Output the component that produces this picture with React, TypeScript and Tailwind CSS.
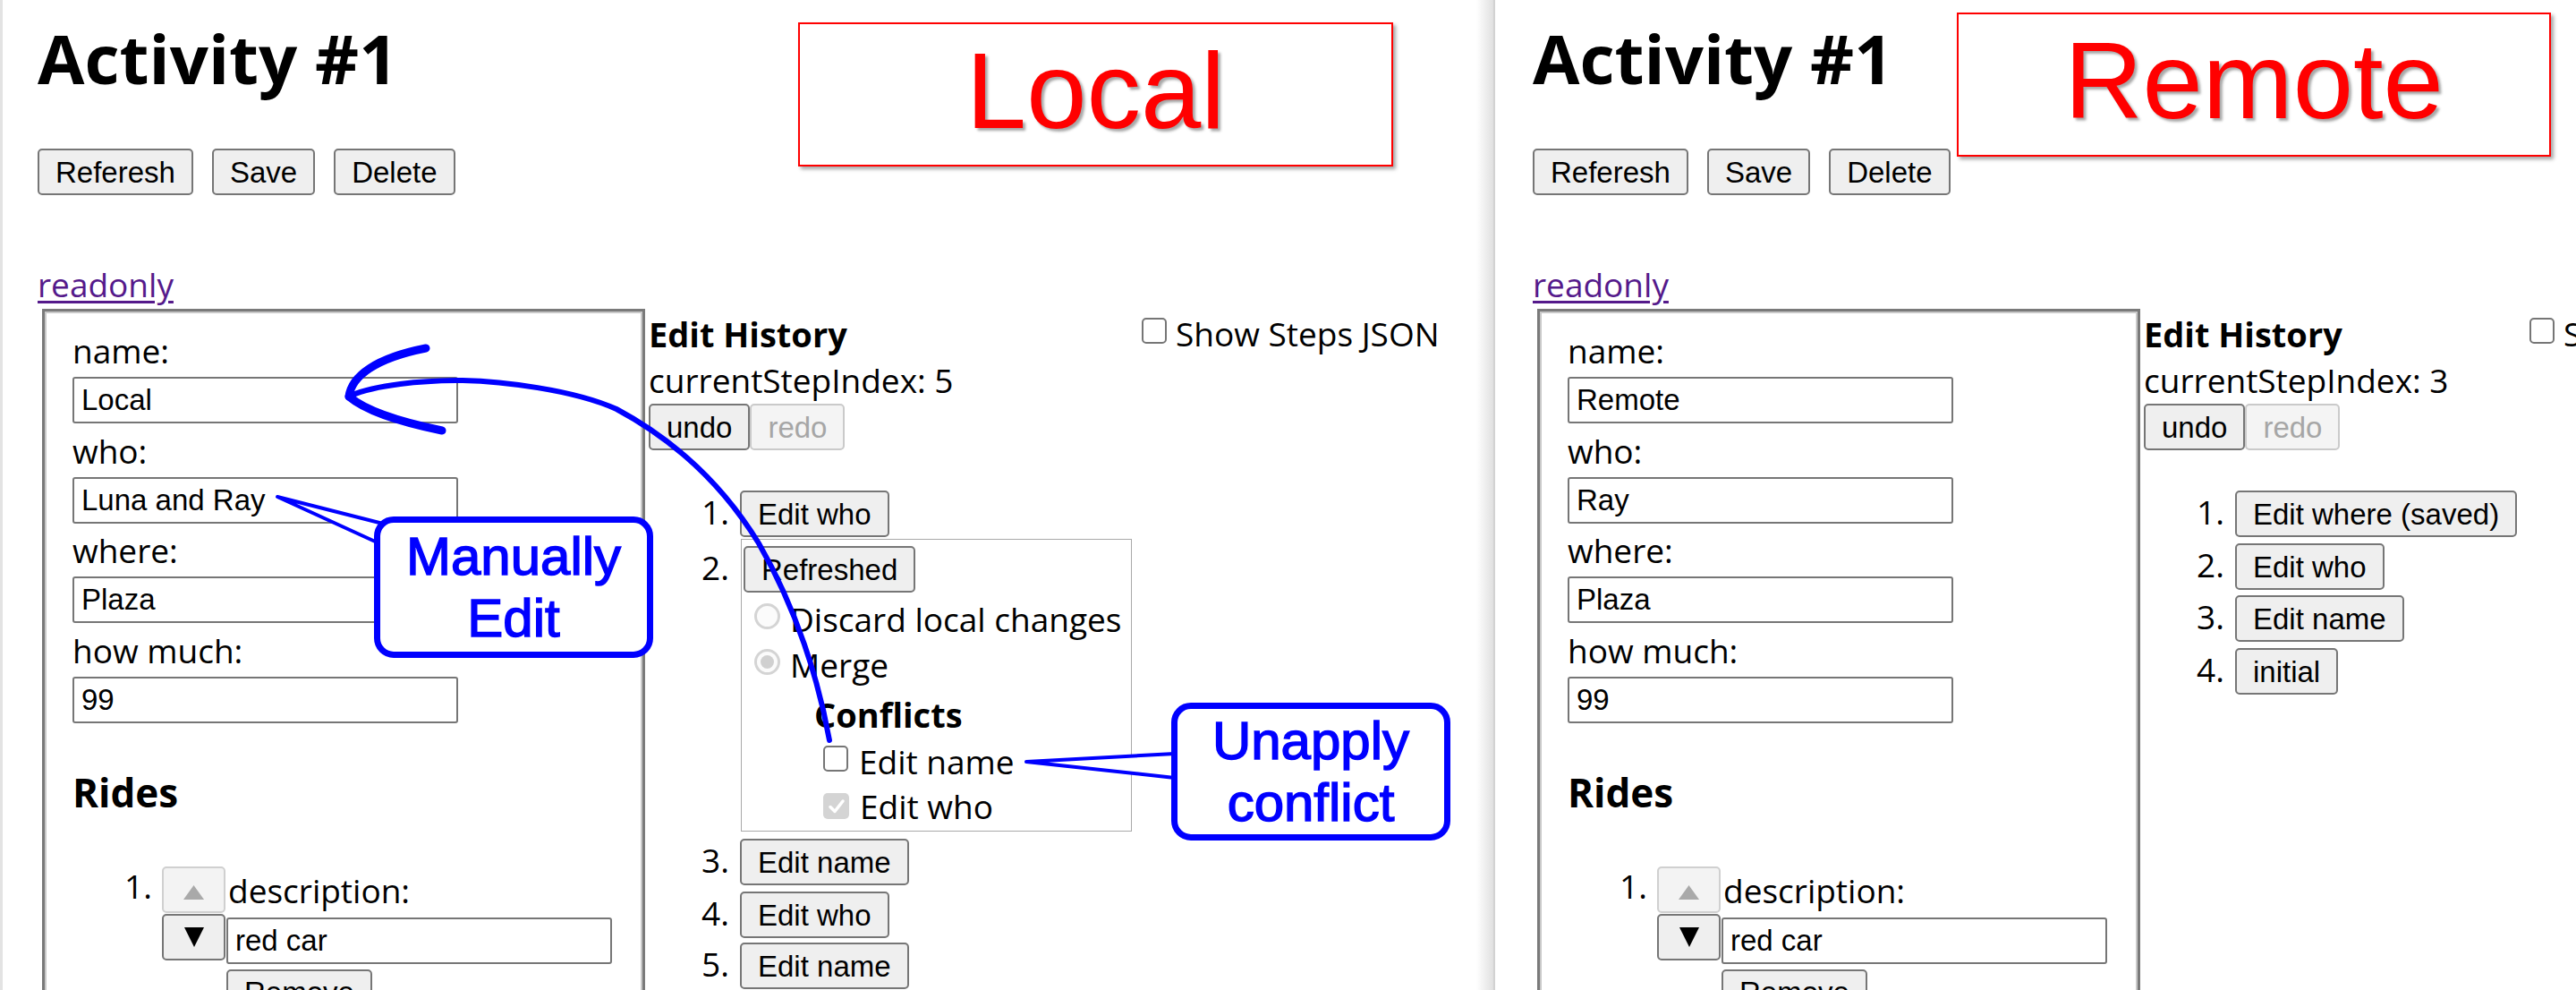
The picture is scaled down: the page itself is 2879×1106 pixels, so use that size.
import type { ReactNode } from 'react'

const sans = "font-['Open_Sans',sans-serif]"
const arial = "font-['Liberation_Sans',Arial,sans-serif]"

function Btn({ children, disabled, className = '' }: { children: ReactNode; disabled?: boolean; className?: string }) {
  return (
    <button
      className={`${arial} h-[52px] shrink-0 whitespace-nowrap rounded-[5px] border-2 px-[18px] text-[33px] leading-none ${
        disabled ? 'border-[#cacaca] bg-[#f4f4f4] text-[#a6a6a6]' : 'border-[#767676] bg-[#efefef] text-black'
      } ${className}`}
    >
      {children}
    </button>
  )
}

function Field({ value, className = '' }: { value: string; className?: string }) {
  return (
    <input
      readOnly
      value={value}
      className={`${arial} block h-[52px] w-[431px] rounded-[3px] border-2 border-[#767676] bg-white px-2 text-[33px] text-black outline-none ${className}`}
    />
  )
}

function Radio({ checked }: { checked?: boolean }) {
  return (
    <span className="mt-[7px] flex h-[29px] w-[29px] shrink-0 items-center justify-center rounded-full border-[3px] border-[#d4d4d4] bg-[#fbfbfb]">
      {checked && <span className="h-[15px] w-[15px] rounded-full bg-[#d0d0d0]" />}
    </span>
  )
}

function Check({ checked, className = '' }: { checked?: boolean; className?: string }) {
  if (checked) {
    return (
      <span className={`flex h-[29px] w-[29px] shrink-0 items-center justify-center rounded-[5px] bg-[#d4d4d4] ${className}`}>
        <svg width="22" height="22" viewBox="0 0 22 22">
          <path d="M4 11.5 L9 16.5 L18 5" fill="none" stroke="white" strokeWidth="3.5" strokeLinecap="round" strokeLinejoin="round" />
        </svg>
      </span>
    )
  }
  return <span className={`block h-[29px] w-[28px] shrink-0 rounded-[5px] border-2 border-[#767676] bg-white ${className}`} />
}

function Marker({ n }: { n: number }) {
  return <span className="w-[93px] shrink-0 pr-[3px] text-right leading-[37px]">{n}.</span>
}

function ConflictBox() {
  return (
    <div className="ml-[10px] w-[437px] border border-[#a9a9a9] pb-[2px] pl-[2px] pt-[7px]">
      <div className="flex">
        <Btn>Refreshed</Btn>
      </div>
      <div className="mt-[5px] flex h-[50px] items-start whitespace-nowrap leading-[50px]">
        <span className="ml-[12px] flex">
          <Radio />
        </span>
        <span className="ml-[11px]">Discard local changes</span>
      </div>
      <div className="mt-[1px] flex h-[50px] items-start leading-[50px]">
        <span className="ml-[12px] flex">
          <Radio checked />
        </span>
        <span className="ml-[11px]">Merge</span>
      </div>
      <div className="mt-[5px] h-[50px] pl-[79px] text-[38px] font-bold leading-[50px]">Conflicts</div>
      <div className="mt-[3px] flex h-[50px] items-start leading-[50px]">
        <Check className="ml-[89px] mt-[7px]" />
        <span className="ml-[12px]">Edit name</span>
      </div>
      <div className="flex h-[50px] items-start leading-[50px]">
        <Check checked className="ml-[89px] mt-[10px]" />
        <span className="ml-[12px]">Edit who</span>
      </div>
    </div>
  )
}

function History({ remote }: { remote?: boolean }) {
  const localSteps = [
    { label: 'Edit who', mt: 'mt-0' },
    { label: 'box', mt: 'mt-[2px]' },
    { label: 'Edit name', mt: 'mt-[8px]' },
    { label: 'Edit who', mt: 'mt-[7px]' },
    { label: 'Edit name', mt: 'mt-[5px]' },
  ]
  const remoteSteps = [
    { label: 'Edit where (saved)', mt: 'mt-0' },
    { label: 'Edit who', mt: 'mt-[7px]' },
    { label: 'Edit name', mt: 'mt-[6px]' },
    { label: 'initial', mt: 'mt-[7px]' },
  ]
  const steps = remote ? remoteSteps : localSteps

  return (
    <div className="ml-[4px] mt-[1px] shrink-0">
      <div className="flex h-[54px] items-start whitespace-nowrap">
        <span className={`${remote ? 'w-[431px]' : 'w-[551px]'} shrink-0 text-[38px] font-bold leading-[54px]`}>
          Edit History
        </span>
        <Check className="mt-[9px]" />
        <span className="ml-[10px] leading-[54px]">Show Steps JSON</span>
      </div>
      <div className="h-[50px] leading-[50px]">currentStepIndex: {remote ? 3 : 5}</div>
      <div className="mt-[1px] flex">
        <Btn>undo</Btn>
        <Btn disabled>redo</Btn>
      </div>
      <ol className="mt-[45px]">
        {steps.map((s, i) => (
          <li key={i} className={`flex items-baseline ${s.mt}`}>
            <Marker n={i + 1} />
            {s.label === 'box' ? (
              <ConflictBox />
            ) : (
              <div className="ml-[9px] flex">
                <Btn>{s.label}</Btn>
              </div>
            )}
          </li>
        ))}
      </ol>
    </div>
  )
}

function Form({ remote }: { remote?: boolean }) {
  const fields = [
    ['name:', remote ? 'Remote' : 'Local'],
    ['who:', remote ? 'Ray' : 'Luna and Ray'],
    ['where:', 'Plaza'],
    ['how much:', '99'],
  ]
  return (
    <div className="ml-[5px] h-[900px] w-[674px] shrink-0 border-[3px] border-[#7a7a7a] pl-[31px] pt-[17px] shadow-[inset_0_0_0_2px_#c9c9c9]">
      {fields.map(([label, value]) => (
        <div key={label}>
          <div className="h-[53px] leading-[53px]">{label}</div>
          <Field value={value} className="mb-[3.5px] mt-[3px]" />
        </div>
      ))}
      <h3 className="mt-[48px] h-[58px] text-[44px] font-bold leading-[58px]">Rides</h3>
      <div className="mt-[54px] flex items-start">
        <span className="-mt-[3px] h-[50px] w-[89px] shrink-0 text-right leading-[50px]">1.</span>
        <div className="ml-[11px] flex shrink-0 flex-col gap-[1px]">
          <button className="flex h-[52px] w-[71px] items-start justify-center rounded-[5px] border-2 border-[#d0d0d0] bg-[#f3f3f3] pt-[19px]">
            <svg width="23" height="16" viewBox="0 0 23 16">
              <path d="M11.5 0 L23 16 L0 16 Z" fill="#a9a9a9" />
            </svg>
          </button>
          <button className="flex h-[52px] w-[71px] items-center justify-center rounded-[5px] border-2 border-[#767676] bg-[#efefef]">
            <svg width="22" height="22" viewBox="0 0 22 22">
              <path d="M0 0 L22 0 L11 22 Z" fill="black" />
            </svg>
          </button>
        </div>
        <div className="ml-[1px] shrink-0">
          <div className="h-[53px] pl-[2px] leading-[53px]">description:</div>
          <Field value="red car" className="mt-[4px]" />
          <Btn className="mt-[6px]">Remove</Btn>
        </div>
      </div>
    </div>
  )
}

function Panel({ remote }: { remote?: boolean }) {
  return (
    <div className={`${sans} pt-[16px] text-[37px] text-black`}>
      <h1 className="h-[98px] whitespace-nowrap text-[76px] font-bold leading-[98px]">Activity #1</h1>
      <div className="mt-[52px] flex gap-[21px]">
        <Btn>Referesh</Btn>
        <Btn>Save</Btn>
        <Btn>Delete</Btn>
      </div>
      <a className="mt-[75px] block h-[50px] w-fit leading-[50px] text-[#551a8b] underline decoration-[3px] underline-offset-[4px]">
        readonly
      </a>
      <div className="mt-[2px] flex items-start">
        <Form remote={remote} />
        <History remote={remote} />
      </div>
    </div>
  )
}

function Label({ text, className }: { text: string; className: string }) {
  return (
    <div
      className={`absolute flex items-center justify-center border-2 border-[#ff0000] bg-white pb-[9px] shadow-[3px_3px_4px_rgba(0,0,0,0.35)] ${className}`}
    >
      <span className={`${arial} text-[121px] leading-none text-[#ff0000] [text-shadow:3px_3px_3px_rgba(0,0,0,0.35)]`}>
        {text}
      </span>
    </div>
  )
}

function Callout({ lines, className }: { lines: string[]; className: string }) {
  return (
    <div
      className={`${arial} absolute flex flex-col items-center justify-center rounded-[22px] border-[7px] border-[#0000ff] bg-white text-[60px] leading-[69px] text-[#0000ff] [-webkit-text-stroke:1.5px_#0000ff] ${className}`}
    >
      {lines.map(l => (
        <span key={l}>{l}</span>
      ))}
    </div>
  )
}

export default function App() {
  return (
    <div className="relative flex h-[1106px] w-[2879px] overflow-hidden bg-white">
      <div className="flex w-[1669px] shrink-0 border-l-[3px] border-[#e3e3e3]">
        <div className="min-w-0 flex-1 overflow-hidden pl-[39px]">
          <Panel />
        </div>
        <div className="w-[19px] shrink-0 bg-linear-to-r from-white to-[#e0e0e0]" />
      </div>
      <div className="w-[2px] shrink-0 bg-[#d2d2d2]" />
      <div className="min-w-0 flex-1 overflow-hidden pl-[42px]">
        <Panel remote />
      </div>

      {/* annotation layer */}
      <svg className="pointer-events-none absolute left-0 top-0" width="2879" height="1106" viewBox="0 0 2879 1106">
        <g fill="none" stroke="#0000ff" strokeLinecap="round" strokeLinejoin="round">
          <path
            d="M927 827 C915 760 890 680 848 607 C810 545 760 495 689 457 C640 435 560 426 517 425 C470 425 420 430 392 442"
            strokeWidth="6"
          />
          <path d="M390 443 C393 420 420 400 476 389" strokeWidth="9" />
          <path d="M390 443 C410 460 450 472 494 481" strokeWidth="9" />
        </g>
        <polygon points="310,555 428,585 428,609" fill="white" stroke="#0000ff" strokeWidth="4" strokeLinejoin="round" />
        <polygon points="1147,851 1313,842 1313,869" fill="white" stroke="#0000ff" strokeWidth="4" strokeLinejoin="round" />
      </svg>

      <Label text="Local" className="left-[892px] top-[25px] h-[161px] w-[665px]" />
      <Label text="Remote" className="left-[2187px] top-[14px] h-[161px] w-[664px]" />
      <Callout lines={['Manually', 'Edit']} className="left-[418px] top-[577px] h-[158px] w-[312px]" />
      <Callout lines={['Unapply', 'conflict']} className="left-[1309px] top-[785px] h-[154px] w-[312px]" />
    </div>
  )
}
